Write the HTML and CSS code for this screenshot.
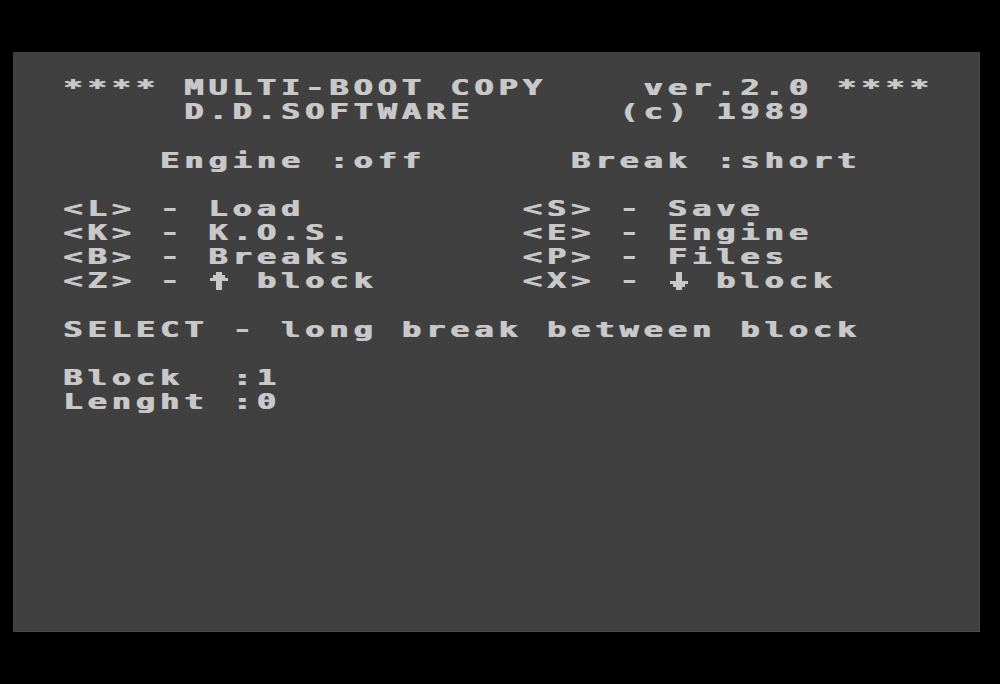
FILE: index.html
```html
<!DOCTYPE html>
<html lang="en">
<head>
    <meta charset="UTF-8">
    <meta name="viewport" content="width=device-width, initial-scale=1.0">
    <title>Multi-Boot Copy</title>
    <link rel="stylesheet" href="styles.css">
</head>
<body>

<div class="screen">
    <div class="text">
        <div class="row"></div>
        <div class="row">  **** MULTI-BOOT COPY    ver.2.0 ****</div>
        <div class="row">       D.D.SOFTWARE      (c) 1989</div>
        <div class="row"></div>
        <div class="row">      Engine :off      Break :short</div>
        <div class="row"></div>
        <div class="row">  &lt;L&gt; - Load         &lt;S&gt; - Save</div>
        <div class="row">  &lt;K&gt; - K.O.S.       &lt;E&gt; - Engine</div>
        <div class="row">  &lt;B&gt; - Breaks       &lt;P&gt; - Files</div>
        <div class="row">  <span>&lt;Z&gt; - </span><span class="arrow"><svg viewBox="0 0 8 8" preserveAspectRatio="none"><path d="M3 1h2v1h1v1h1v1H5v3H3V4H1V3h1V2h1z"/></svg></span><span> block      &lt;X&gt; - </span><span class="arrow"><svg viewBox="0 0 8 8" preserveAspectRatio="none"><path d="M3 1h2v3h2v1H6v1H5v1H3V6H2V5H1V4h2z"/></svg></span><span> block</span></div>
        <div class="row"></div>
        <div class="row">  SELECT - long break between block</div>
        <div class="row"></div>
        <div class="row">  Block  :1</div>
        <div class="row">  Lenght :0</div>
    </div>
</div>

</body>
</html>
```

FILE: styles.css
```css
body {
    margin: 0;
    padding: 0;
    background-color: #000000;
    overflow: hidden;
}
.screen {
    margin: 52px 0 0 13px;
    width: 967px;
    height: 580px;
    background-color: #404040;
    box-shadow: inset -1px -1px 0 #4c4c4c;
    overflow: hidden;
}
.text {
    width: 667px;
    padding: 0 0 0 1px;
    font-family: "DejaVu Sans Mono", "Liberation Mono", monospace;
    font-weight: bold;
    font-size: 22px;
    line-height: 24.17px;
    letter-spacing: 3.43px;
    color: #c8c8c8;
    text-shadow: 1px 0 0 #c8c8c8;
    transform: scaleX(1.45);
    transform-origin: 0 0;
}
.row {
    height: 24.17px;
    white-space: pre;
}
.arrow {
    display: inline-block;
    width: 16.67px;
    height: 24px;
    vertical-align: top;
}
.arrow svg {
    display: block;
    width: 16.67px;
    height: 24px;
    fill: #c8c8c8;
    shape-rendering: crispEdges;
}
```
